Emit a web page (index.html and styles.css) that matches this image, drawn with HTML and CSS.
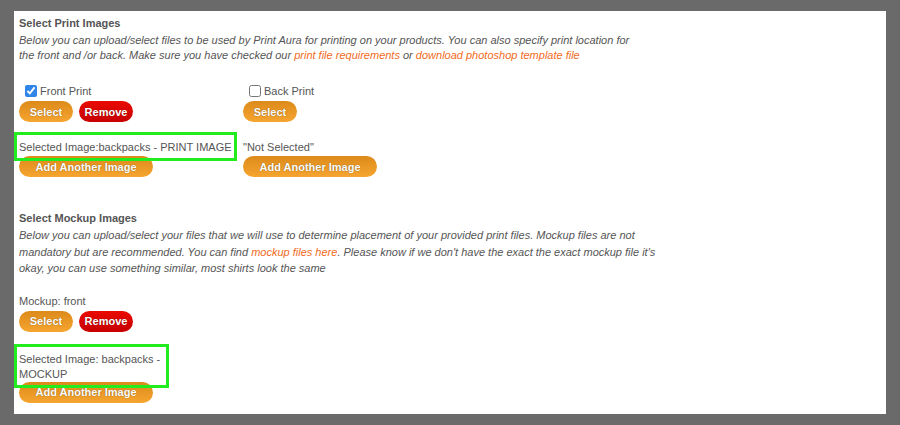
FILE: index.html
```html
<!DOCTYPE html>
<html lang="en">
<head>
  <meta charset="UTF-8">
  <title>Select Print Images</title>
  <link rel="stylesheet" href="styles.css">
</head>
<body>
  <div class="panel">
    <section class="group">
      <h3 class="group-title">Select Print Images</h3>
      <p class="group-desc">
        Below you can upload/select files to be used by Print Aura for printing on your products. You can also specify print location for<br>
        the front and /or back. Make sure you have checked our <a href="#">print file requirements</a> or <a href="#">download photoshop template file</a>
      </p>

      <div class="prints">
        <div class="print-col">
          <label class="check"><input type="checkbox" checked> Front Print</label>
          <div class="btn-row">
            <button class="btn btn-orange btn-sm">Select</button>
            <button class="btn btn-red btn-sm">Remove</button>
          </div>
          <div class="selected"><span class="mark">Selected Image:backpacks - PRINT IMAGE</span></div>
          <button class="btn btn-orange btn-wide">Add Another Image</button>
        </div>

        <div class="print-col">
          <label class="check"><input type="checkbox"> Back Print</label>
          <div class="btn-row">
            <button class="btn btn-orange btn-sm">Select</button>
          </div>
          <div class="selected">"Not Selected"</div>
          <button class="btn btn-orange btn-wide">Add Another Image</button>
        </div>
      </div>
    </section>

    <section class="group group-mockup">
      <h3 class="group-title">Select Mockup Images</h3>
      <p class="group-desc desc-loose">
        Below you can upload/select your files that we will use to determine placement of your provided print files. Mockup files are not<br>
        mandatory but are recommended. You can find <a href="#">mockup files here</a>. Please know if we don't have the exact the exact mockup file it's<br>
        okay, you can use something similar, most shirts look the same
      </p>

      <div class="mockup">
        <div class="mockup-label">Mockup: front</div>
        <div class="btn-row">
          <button class="btn btn-orange btn-sm">Select</button>
          <button class="btn btn-red btn-sm">Remove</button>
        </div>
        <div class="selected selected-mockup"><span class="mark mark-narrow">Selected Image: backpacks - MOCKUP</span></div>
        <button class="btn btn-orange btn-wide">Add Another Image</button>
      </div>
    </section>
  </div>
</body>
</html>
```

FILE: styles.css
```css
body {
  margin: 0;
  padding: 11px 14px;
  background-color: #6b6a6b;
  font-family: 'Liberation Sans', Arial, sans-serif;
  font-size: 11px;
  color: #555;
}

.panel {
  background-color: white;
  height: 403px;
  box-sizing: border-box;
  padding: 4px 5px 0;
}

.group-title {
  margin: 0;
  font-size: 11px;
  line-height: 16px;
  font-weight: bold;
  color: #555;
}

.group-desc {
  margin: 2px 0 0;
  line-height: 15px;
  font-style: italic;
  color: #555;
}

.group-desc a {
  color: #f26b23;
  text-decoration: none;
}

.desc-loose {
  margin-top: 1px;
  line-height: 16.5px;
}

.group-mockup {
  margin-top: 33px;
}

.prints {
  display: grid;
  grid-template-columns: 224px auto;
  margin-top: 20px;
}

.check {
  display: flex;
  align-items: center;
  height: 16px;
  padding-left: 6px;
  gap: 3px;
}

.check input {
  margin: 0;
  width: 12px;
  height: 12px;
  accent-color: #2f86e8;
}

.btn-row {
  display: flex;
  gap: 6px;
  margin-top: 2px;
}

.btn {
  height: 21px;
  padding: 0;
  border: none;
  border-radius: 11px;
  font-family: 'Liberation Sans', Arial, sans-serif;
  font-size: 11px;
  font-weight: bold;
  color: white;
  text-shadow: 0 0 1px rgba(0,0,0,0.5);
  cursor: pointer;
}

.btn-orange {
  background: linear-gradient(to bottom, #dc8a1a, #f6a530);
}

.btn-red {
  background: linear-gradient(to bottom, #ea0a00, #c70000);
}

.btn-sm {
  width: 54px;
}

.btn-wide {
  display: block;
  width: 134px;
}

.selected {
  margin-top: 18px;
  line-height: 15px;
  margin-bottom: 1px;
}

.mark {
  position: relative;
  display: inline-block;
}

.mark::after {
  content: "";
  position: absolute;
  top: -8px;
  bottom: -6px;
  left: -5px;
  right: -5px;
  border: 3px solid #22ec1e;
  pointer-events: none;
}

.mark-narrow {
  width: 145px;
}

.mockup {
  margin-top: 16px;
}

.mockup-label {
  line-height: 16px;
}

.selected-mockup {
  margin-top: 20px;
  margin-bottom: 0;
}
```
